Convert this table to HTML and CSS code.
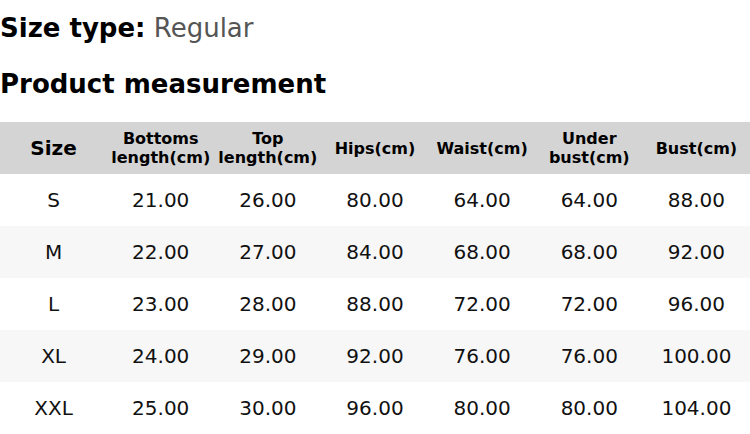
FILE: index.html
```html
<!DOCTYPE html>
<html>
<head>
<meta charset="utf-8">
<link rel="stylesheet" href="styles.css">
</head>
<body>
<div class="page">
  <p class="size-type"><span class="label">Size type:</span> <span class="value">Regular</span></p>
  <h2 class="title">Product measurement</h2>
  <table class="chart">
    <thead>
      <tr>
        <th class="first">Size</th>
        <th>Bottoms<br>length(cm)</th>
        <th>Top<br>length(cm)</th>
        <th>Hips(cm)</th>
        <th>Waist(cm)</th>
        <th>Under<br>bust(cm)</th>
        <th>Bust(cm)</th>
      </tr>
    </thead>
    <tbody>
      <tr><td>S</td><td>21.00</td><td>26.00</td><td>80.00</td><td>64.00</td><td>64.00</td><td>88.00</td></tr>
      <tr><td>M</td><td>22.00</td><td>27.00</td><td>84.00</td><td>68.00</td><td>68.00</td><td>92.00</td></tr>
      <tr><td>L</td><td>23.00</td><td>28.00</td><td>88.00</td><td>72.00</td><td>72.00</td><td>96.00</td></tr>
      <tr><td>XL</td><td>24.00</td><td>29.00</td><td>92.00</td><td>76.00</td><td>76.00</td><td>100.00</td></tr>
      <tr><td>XXL</td><td>25.00</td><td>30.00</td><td>96.00</td><td>80.00</td><td>80.00</td><td>104.00</td></tr>
    </tbody>
  </table>
</div>
</body>
</html>
```

FILE: styles.css
```css
html, body {
  margin: 0;
  padding: 0;
  background: #ffffff;
}

.page {
  font-family: "DejaVu Sans", sans-serif;
  color: #000;
  width: 750px;
}

.size-type {
  margin: 13px 0 0;
  font-size: 26px;
  line-height: 30px;
}

.size-type .label {
  font-weight: bold;
}

.size-type .value {
  color: #555555;
}

.title {
  margin: 26px 0 0;
  font-size: 26px;
  line-height: 30px;
  font-weight: bold;
}

.chart {
  margin-top: 23px;
  width: 750px;
  border-collapse: collapse;
  table-layout: fixed;
}

.chart th,
.chart td {
  padding: 0;
  height: 52px;
  text-align: center;
  vertical-align: middle;
}

.chart thead tr {
  background: #d4d4d4;
}

.chart th {
  font-size: 16px;
  line-height: 19px;
  font-weight: bold;
}

.chart th.first {
  font-size: 20px;
}

.chart td {
  font-size: 20px;
  line-height: 24px;
  color: #111;
}

.chart tbody tr:nth-child(even) {
  background: #f7f7f7;
}
```
